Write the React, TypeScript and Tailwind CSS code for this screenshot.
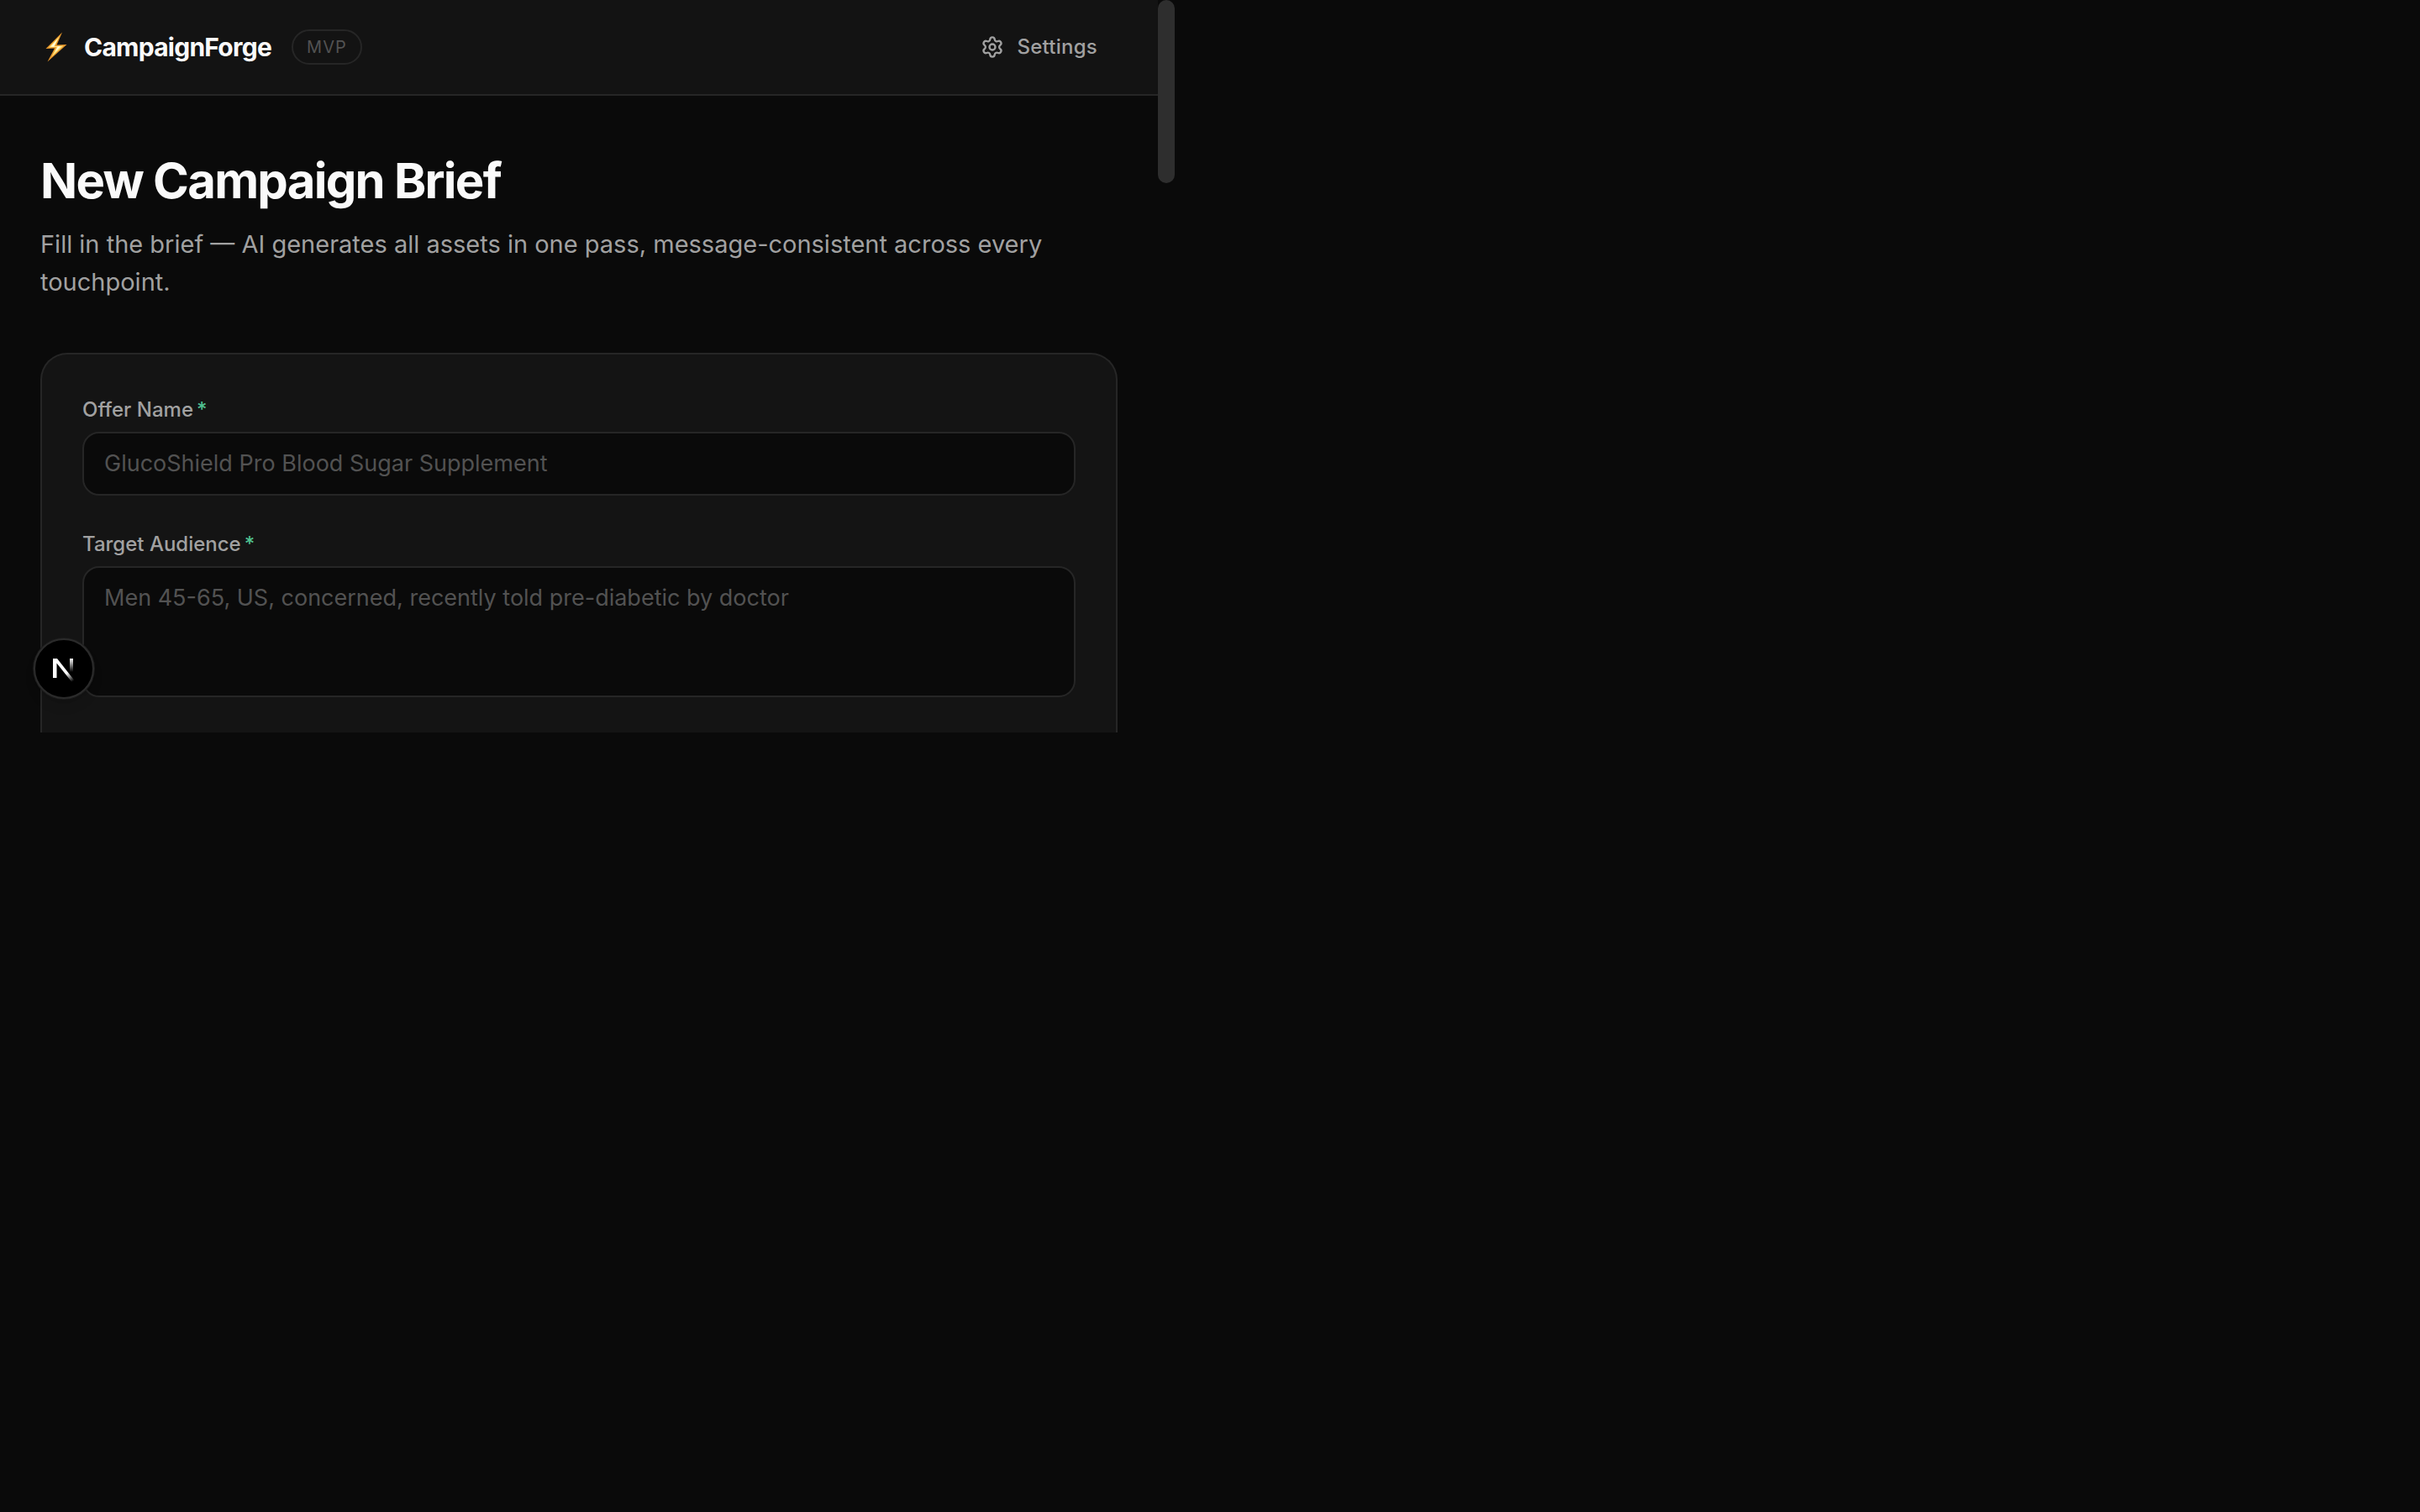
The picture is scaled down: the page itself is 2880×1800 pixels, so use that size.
import { ReactNode, useState } from 'react';
import { Settings } from 'lucide-react';

const EMPTY_BRIEF = { offerName: '', targetAudience: '' };

const FIELD_CLASSES =
  'block w-full rounded-[20px] border-2 border-[#262626] bg-[#0a0a0a] px-6 py-4 text-[27px] leading-10 text-[#fafafa] placeholder:text-[#525252] focus:outline-none focus:border-[#4fbf8f]';

interface FieldProps {
  id: string;
  label: string;
  children: ReactNode;
}

const Field = ({ id, label, children }: FieldProps) => (
  <div>
    <label htmlFor={id} className="mb-2 flex gap-1 text-2xl leading-9 font-medium text-[#a1a1a1]">
      {label}
      <span className="text-[#4fbf8f]">*</span>
    </label>
    {children}
  </div>
);

const BoltIcon = () => (
  <svg viewBox="0 0 26 36" className="h-9 w-[26px]" aria-hidden="true">
    <path d="M20 0.5 L0.5 20 L11 19.5 L2.5 35.5 L25.5 15 L13.5 15.5 Z" fill="#e8972b" />
    <path d="M17 5 L4 18.5 L13.5 18 L7.5 29.5 L21.5 16.5 L11 17 Z" fill="#ffe47a" />
    <path d="M14.5 8.5 L6.5 17.5 L15 17 L11.5 24 L18.5 17 L10 17.5 Z" fill="#fffbe0" />
  </svg>
);

const NextIcon = () => (
  <svg viewBox="0 0 26 28" className="h-7 w-[26px]" fill="none" aria-hidden="true">
    <defs>
      <linearGradient id="stem" x1="0" y1="0" x2="0" y2="16" gradientUnits="userSpaceOnUse">
        <stop stopColor="#fff" />
        <stop offset="1" stopColor="#fff" stopOpacity="0" />
      </linearGradient>
      <linearGradient id="diagonal" x1="17" y1="17" x2="24" y2="27" gradientUnits="userSpaceOnUse">
        <stop stopColor="#fff" />
        <stop offset="1" stopColor="#fff" stopOpacity="0" />
      </linearGradient>
    </defs>
    <path d="M20 0 H24 V16 H20 Z" fill="url(#stem)" />
    <path d="M0 0 H5 L25.5 26 L22.5 28 L4.5 5.5 V23 H0 Z" fill="url(#diagonal)" />
  </svg>
);

const Header = () => (
  <header className="flex items-center justify-between border-b-2 border-[#262626] bg-[#131313] px-12 py-7">
    <div className="flex items-center gap-6">
      <div className="flex items-center gap-5 pl-1.5">
        <BoltIcon />
        <span className="text-3xl leading-14 font-bold tracking-tight text-[#fafafa]">CampaignForge</span>
      </div>
      <span className="rounded-full border-2 border-[#262626] px-4 py-1 text-xl leading-[30px] tracking-wider text-[#525252]">
        MVP
      </span>
    </div>
    <button
      type="button"
      className="flex cursor-pointer items-center gap-4 px-6 text-2xl font-medium tracking-[0.01em] text-[#a1a1a1]"
    >
      <Settings size={28} />
      Settings
    </button>
  </header>
);

const BriefForm = () => {
  const [brief, setBrief] = useState(EMPTY_BRIEF);

  return (
    <form
      className="flex flex-col gap-10 rounded-t-[32px] border-2 border-b-0 border-[#262626] bg-[#141414] px-12 pt-12 pb-[42px]"
      onSubmit={(e) => e.preventDefault()}
    >
      <Field id="offerName" label="Offer Name">
        <input
          type="text"
          id="offerName"
          name="offerName"
          placeholder="GlucoShield Pro Blood Sugar Supplement"
          value={brief.offerName}
          onChange={(e) => setBrief({ ...brief, offerName: e.target.value })}
          className={FIELD_CLASSES}
        />
      </Field>
      <Field id="targetAudience" label="Target Audience">
        <textarea
          id="targetAudience"
          name="targetAudience"
          rows={3}
          placeholder="Men 45-65, US, concerned, recently told pre-diabetic by doctor"
          value={brief.targetAudience}
          onChange={(e) => setBrief({ ...brief, targetAudience: e.target.value })}
          className={`${FIELD_CLASSES} resize-none`}
        />
      </Field>
    </form>
  );
};

export default function App() {
  return (
    <div className="min-h-screen bg-[#0a0a0a] font-[Inter,sans-serif]">
      <div className="relative flex w-full max-w-[1398px] items-start">
        <div className="min-w-0 flex-1">
          <Header />
          <main className="px-12 pt-16">
            <h1 className="text-[58px] leading-[74px] font-bold tracking-[-0.03em] text-[#fafafa]">
              New Campaign Brief
            </h1>
            <p className="mt-4 mb-[62px] text-[29px] leading-[45px] text-[#a1a1a1]">
              Fill in the brief — AI generates all assets in one pass, message-consistent across every touchpoint.
            </p>
            <BriefForm />
          </main>
        </div>
        <div className="h-[218px] w-5 rounded-full bg-[#2e2e2e]" />
        <button
          type="button"
          aria-label="Open Next.js Dev Tools"
          className="absolute bottom-10 left-10 flex size-18 cursor-pointer items-center justify-center rounded-full border-2 border-[#2b2b2b] bg-black pt-1 shadow-lg ring-1 ring-[#1c1c1c]"
        >
          <NextIcon />
        </button>
      </div>
    </div>
  );
}
